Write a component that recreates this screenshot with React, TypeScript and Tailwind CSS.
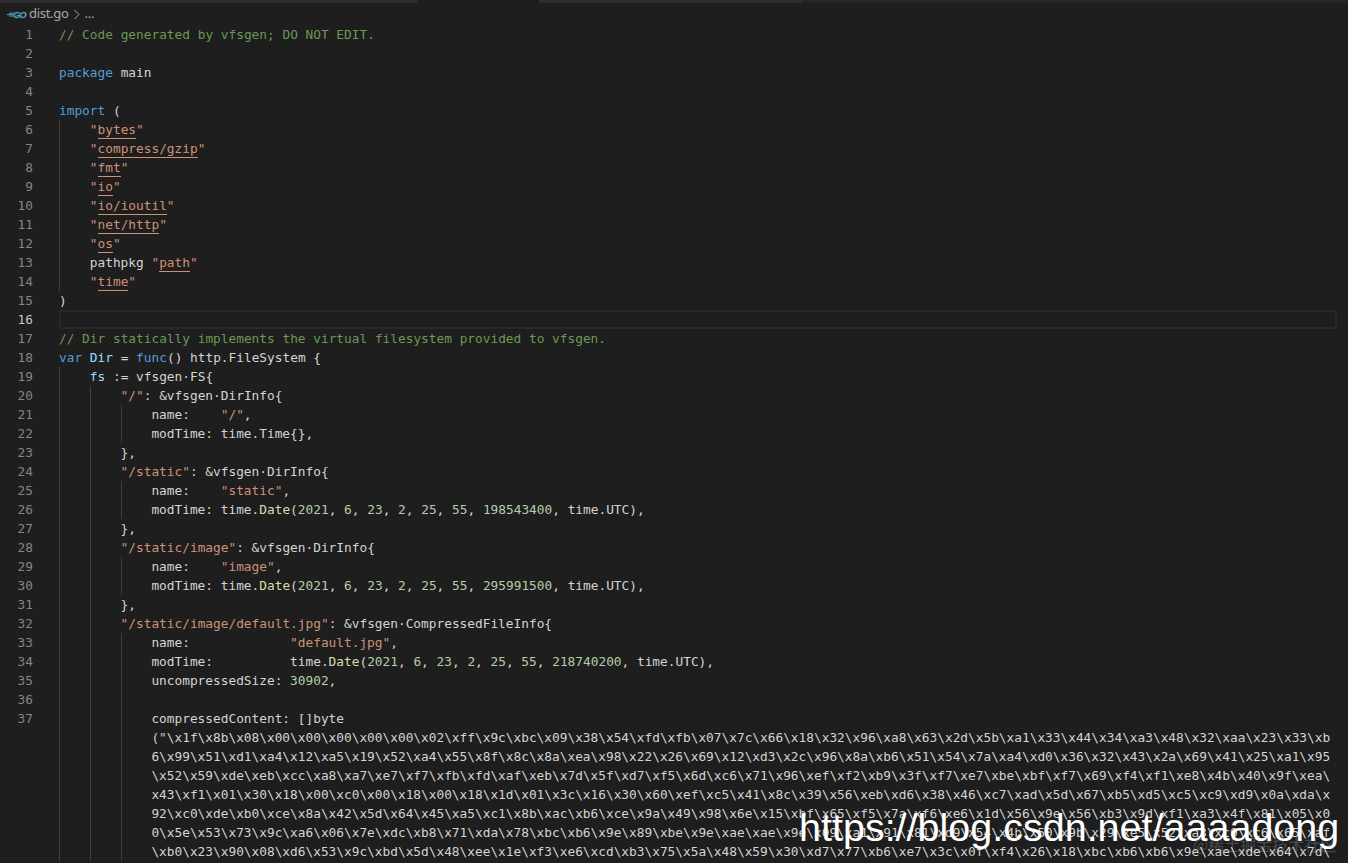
import React from "react";

const C = {
  t: "text-[#d4d4d4]",
  c: "text-[#6a9955]",
  k: "text-[#569cd6]",
  s: "text-[#ce9178]",
  v: "text-[#9cdcfe]",
  f: "text-[#dcdcaa]",
  n: "text-[#b5cea8]",
};
type Kind = keyof typeof C | "u";
type Tok = [Kind, string];

const t = (s: string): Tok => ["t", s];
const s = (x: string): Tok => ["s", x];
const n = (x: string): Tok => ["n", x];
const imp = (p: string): Tok[] => [s('"'), ["u", p], s('"')];
const date = (prefix: string, nano: string): Tok[] => [
  t(prefix + "time."),
  ["f", "Date"],
  t("("),
  n("2021"),
  t(", "),
  n("6"),
  t(", "),
  n("23"),
  t(", "),
  n("2"),
  t(", "),
  n("25"),
  t(", "),
  n("55"),
  t(", "),
  n(nano),
  t(", time.UTC),"),
];

type Line = { num?: number; indent: number; toks: Tok[]; active?: boolean };

const hex = [
  '("\\x1f\\x8b\\x08\\x00\\x00\\x00\\x00\\x00\\x02\\xff\\x9c\\xbc\\x09\\x38\\x54\\xfd\\xfb\\x07\\x7c\\x66\\x18\\x32\\x96\\xa8\\x63\\x2d\\x5b\\xa1\\x33\\x44\\x34\\xa3\\x48\\x32\\xaa\\x23\\x33\\xb',
  "6\\x99\\x51\\xd1\\xa4\\x12\\xa5\\x19\\x52\\xa4\\x55\\x8f\\x8c\\x8a\\xea\\x98\\x22\\x26\\x69\\x12\\xd3\\x2c\\x96\\x8a\\xb6\\x51\\x54\\x7a\\xa4\\xd0\\x36\\x32\\x43\\x2a\\x69\\x41\\x25\\xa1\\x95",
  "\\x52\\x59\\xde\\xeb\\xcc\\xa8\\xa7\\xe7\\xf7\\xfb\\xfd\\xaf\\xeb\\x7d\\x5f\\xd7\\xf5\\x6d\\xc6\\x71\\x96\\xef\\xf2\\xb9\\x3f\\xf7\\xe7\\xbe\\xbf\\xf7\\x69\\xf4\\xf1\\xe8\\x4b\\x40\\x9f\\xea\\",
  "x43\\xf1\\x01\\x30\\x18\\x00\\xc0\\x00\\x18\\x00\\x18\\x1d\\x01\\x3c\\x16\\x30\\x60\\xef\\xc5\\x41\\x8c\\x39\\x56\\xeb\\xd6\\x38\\x46\\xc7\\xad\\x5d\\x67\\xb5\\xd5\\xc5\\xc9\\xd9\\x0a\\xda\\x",
  "92\\xc0\\xde\\xb0\\xce\\x8a\\x42\\x5d\\x64\\x45\\xa5\\xc1\\x8b\\xac\\xb6\\xce\\x9a\\x49\\x98\\x6e\\x15\\xbf\\x65\\xf5\\x7a\\xf6\\xe6\\x1d\\x56\\x9e\\x56\\xb3\\x9d\\xf1\\xa3\\x4f\\x81\\x05\\x0",
  "0\\x5e\\x53\\x73\\x9c\\xa6\\x06\\x7e\\xdc\\xb8\\x71\\xda\\x78\\xbc\\xb6\\x9e\\x89\\xbe\\x9e\\xae\\xae\\x9e\\x09\\xa1\\x91\\x81\\xd9\\x54\\x4b\\x50\\x9b\\x29\\xe5\\x52\\xa3\\xc0\\xc6\\x65\\xaf",
  "\\xb0\\x23\\x90\\x08\\xd6\\x53\\x9c\\xbd\\x5d\\x48\\xee\\x1e\\xf3\\xe6\\xcd\\xb3\\x75\\x5a\\x48\\x59\\x30\\xd7\\x77\\xb6\\xe7\\x3c\\x0f\\xf4\\x26\\x18\\xbc\\xb6\\xb6\\x9e\\xae\\xde\\x64\\x7d\\",
];

const lines: Line[] = [
  { num: 1, indent: 0, toks: [["c", "// Code generated by vfsgen; DO NOT EDIT."]] },
  { num: 2, indent: 0, toks: [] },
  { num: 3, indent: 0, toks: [["k", "package"], t(" main")] },
  { num: 4, indent: 0, toks: [] },
  { num: 5, indent: 0, toks: [["k", "import"], t(" (")] },
  { num: 6, indent: 1, toks: imp("bytes") },
  { num: 7, indent: 1, toks: imp("compress/gzip") },
  { num: 8, indent: 1, toks: imp("fmt") },
  { num: 9, indent: 1, toks: imp("io") },
  { num: 10, indent: 1, toks: imp("io/ioutil") },
  { num: 11, indent: 1, toks: imp("net/http") },
  { num: 12, indent: 1, toks: imp("os") },
  { num: 13, indent: 1, toks: [t("pathpkg "), ...imp("path")] },
  { num: 14, indent: 1, toks: imp("time") },
  { num: 15, indent: 0, toks: [t(")")] },
  { num: 16, indent: 0, toks: [], active: true },
  { num: 17, indent: 0, toks: [["c", "// Dir statically implements the virtual filesystem provided to vfsgen."]] },
  {
    num: 18,
    indent: 0,
    toks: [["k", "var"], t(" "), ["v", "Dir"], t(" = "), ["k", "func"], t("() http.FileSystem {")],
  },
  { num: 19, indent: 1, toks: [["v", "fs"], t(" := vfsgen·FS{")] },
  { num: 20, indent: 2, toks: [s('"/"'), t(": &vfsgen·DirInfo{")] },
  { num: 21, indent: 3, toks: [t("name:    "), s('"/"'), t(",")] },
  { num: 22, indent: 3, toks: [t("modTime: time.Time{},")] },
  { num: 23, indent: 2, toks: [t("},")] },
  { num: 24, indent: 2, toks: [s('"/static"'), t(": &vfsgen·DirInfo{")] },
  { num: 25, indent: 3, toks: [t("name:    "), s('"static"'), t(",")] },
  { num: 26, indent: 3, toks: date("modTime: ", "198543400") },
  { num: 27, indent: 2, toks: [t("},")] },
  { num: 28, indent: 2, toks: [s('"/static/image"'), t(": &vfsgen·DirInfo{")] },
  { num: 29, indent: 3, toks: [t("name:    "), s('"image"'), t(",")] },
  { num: 30, indent: 3, toks: date("modTime: ", "295991500") },
  { num: 31, indent: 2, toks: [t("},")] },
  { num: 32, indent: 2, toks: [s('"/static/image/default.jpg"'), t(": &vfsgen·CompressedFileInfo{")] },
  { num: 33, indent: 3, toks: [t("name:             "), s('"default.jpg"'), t(",")] },
  { num: 34, indent: 3, toks: date("modTime:          ", "218740200") },
  { num: 35, indent: 3, toks: [t("uncompressedSize: "), n("30902"), t(",")] },
  { num: 36, indent: 3, toks: [] },
  { num: 37, indent: 3, toks: [t("compressedContent: []byte")] },
  ...hex.map((h): Line => ({ indent: 3, toks: [t(h)] })),
];

function Row({ line }: { line: Line }) {
  return (
    <div className="flex h-[19px] leading-[19px]">
      <div
        className={`w-[33px] shrink-0 text-right ${line.active ? "text-[#c6c6c6]" : "text-[#858585]"}`}
      >
        {line.num}
      </div>
      <div className="w-[26px] shrink-0" />
      <div
        className={`flex h-[19px] min-w-0 flex-1 whitespace-pre ${
          line.active ? "border-2 border-[#282828]" : ""
        }`}
      >
        {Array.from({ length: line.indent }).map((_, i) => (
          <span key={i} className="h-[19px] w-[30.8px] shrink-0 border-l border-[#404040]" />
        ))}
        <span>
          {line.toks.map(([kind, text], i) =>
            kind === "u" ? (
              <span
                key={i}
                className="inline-block h-[19px] border-b border-[#ce9178] align-top text-[#ce9178]"
              >
                {text}
              </span>
            ) : (
              <span key={i} className={C[kind]}>
                {text}
              </span>
            ),
          )}
        </span>
      </div>
    </div>
  );
}

function TabStrip() {
  return (
    <div className="flex h-[3px] bg-[#252526]">
      <div className="w-[116px] border-r border-[#252526] bg-[#2d2d2d]" />
      <div className="w-[182px] border-r border-[#252526] bg-[#2d2d2d]" />
      <div className="w-[120px] bg-[#2d2d2d]" />
      <div className="w-[121px] bg-[#1e1e1e]" />
      <div className="w-[134px] border-r border-[#252526] bg-[#2d2d2d]" />
      <div className="w-[129px] bg-[#2d2d2d]" />
    </div>
  );
}

function GoIcon() {
  return (
    <svg width="20" height="14" viewBox="0 0 20 14" className="shrink-0">
      <path d="M2 6.2h5M0 7.6h6.5M2 9h4" stroke="#519aba" strokeWidth="1" fill="none" />
      <text
        x="6"
        y="11"
        fontFamily="'Liberation Sans', sans-serif"
        fontWeight="700"
        fontStyle="italic"
        fontSize="9.5"
        fill="#519aba"
        stroke="#519aba"
        strokeWidth="0.3"
        letterSpacing="-1.2"
      >
        GO
      </text>
    </svg>
  );
}

export default function App() {
  return (
    <div className="relative h-[863px] w-full overflow-hidden bg-[#1e1e1e]">
      <TabStrip />
      <div className="flex h-[22px] items-center pl-[7px] font-['Noto_Sans',sans-serif] text-[13px] tracking-[-0.3px] text-[#a9a9a9]">
        <GoIcon />
        <span className="ml-[2px]">dist.go</span>
        <svg width="8" height="11" viewBox="0 0 8 11" className="ml-[4px] shrink-0">
          <path d="M1.5 1l4.5 4.5L1.5 10" stroke="#a9a9a9" strokeWidth="1" fill="none" />
        </svg>
        <span className="ml-[4px]">...</span>
      </div>
      <div className="w-[1337px] font-['DejaVu_Sans_Mono',monospace] text-[12.8px]">
        {lines.map((l, i) => (
          <Row key={i} line={l} />
        ))}
      </div>
      <div className="absolute left-[799px] top-[800px] whitespace-nowrap font-['Liberation_Sans',sans-serif] text-[39.5px] leading-[55px] text-white">
        https://blog.csdn.net/aaaadong
      </div>
      <div className="absolute left-[1193px] top-[834px] whitespace-nowrap font-['Noto_Sans_CJK_SC',sans-serif] text-[16px] leading-[20px] text-white/20">
        @稀土掘金技术社区
      </div>
    </div>
  );
}
